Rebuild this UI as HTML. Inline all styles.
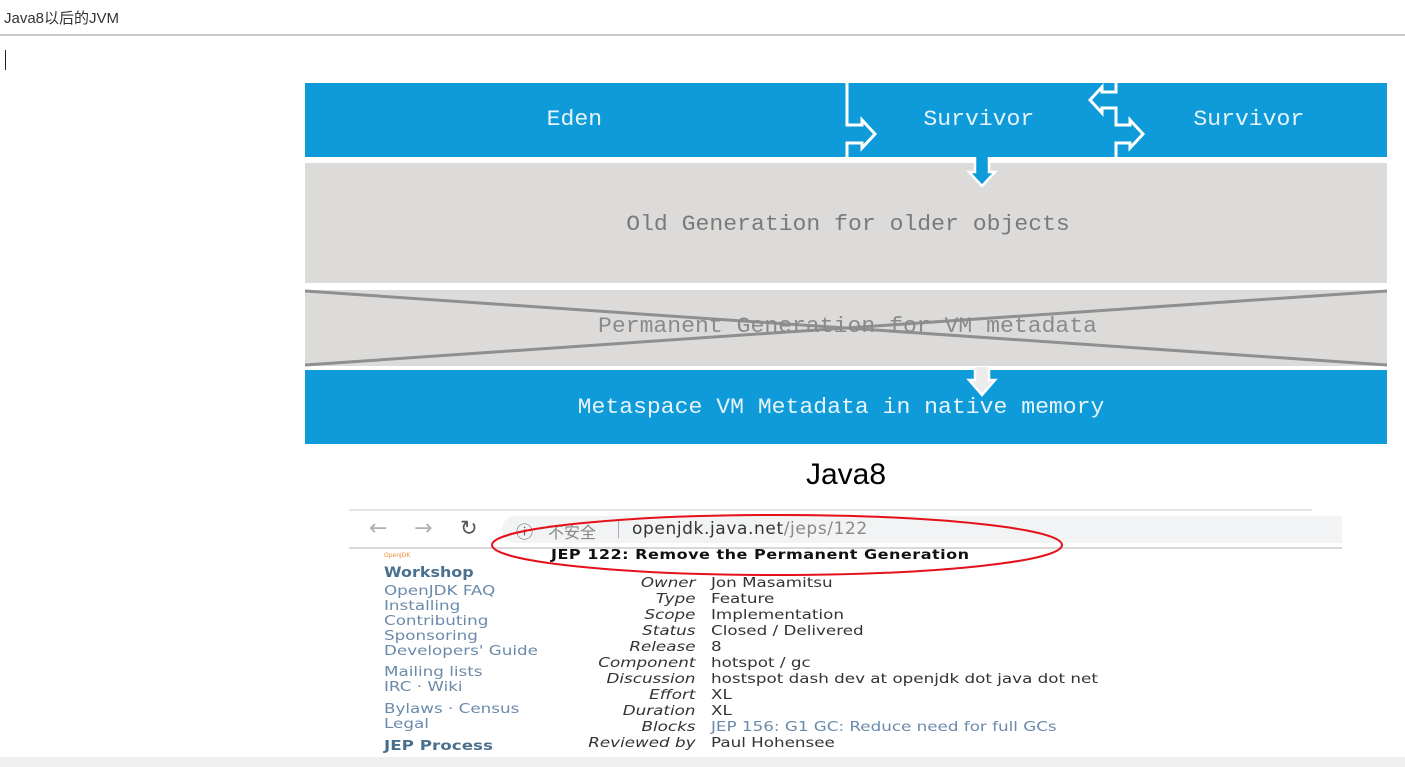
<!DOCTYPE html>
<html><head><meta charset="utf-8"><style>
*{margin:0;padding:0;box-sizing:border-box}
body{width:1405px;height:767px;overflow:hidden;background:#fff;position:relative;font-family:"Liberation Sans","Noto Sans CJK SC",sans-serif}
.a{position:absolute;white-space:nowrap}
.m{font-family:"Liberation Mono","DejaVu Sans Mono",monospace;font-size:22px;transform:scaleX(1.05);transform-origin:center}
.d{font-family:"DejaVu Sans","Liberation Sans",sans-serif;font-size:13.5px}
.sx{transform:scaleX(1.24);transform-origin:left top}
.lk{color:#6a8aaa}
.lb{font-style:italic;color:#333;right:710px;text-align:right;transform:scaleX(1.24);transform-origin:right top}
.v{left:711px;color:#333}
</style></head><body>
<div class="a" style="left:4px;top:7px;font-size:15px;color:#333">Java8以后的JVM</div>
<div class="a" style="left:0;top:34px;width:1405px;height:2px;background:#c8c8c8"></div>
<div class="a" style="left:5px;top:50px;width:1px;height:20px;background:#222"></div>

<svg class="a" style="left:0;top:0" width="1405" height="460">
<rect x="305" y="83" width="1082" height="74" fill="#0f9bd9"/>
<rect x="305" y="163" width="1082" height="120" fill="#dcdbda"/>
<rect x="305" y="290" width="1082" height="76" fill="#dcdbda"/>
<rect x="305" y="370" width="1082" height="74" fill="#0f9bd9"/>
<line x1="305" y1="291" x2="1387" y2="365" stroke="#8f8f8f" stroke-width="3"/>
<line x1="305" y1="365" x2="1387" y2="291" stroke="#8f8f8f" stroke-width="3"/>
<path d="M847 83 V125 H862 V120 L875 134 L862 148 V143 H847 V157" fill="#0f9bd9" stroke="#fff" stroke-width="3"/>
<path d="M1116 83 V92 H1102 V87 L1090 100 L1102 113 V108 H1116 V125 H1130 V120 L1143 134 L1130 148 V143 H1116 V157" fill="#0f9bd9" stroke="#fff" stroke-width="3"/>
<path d="M975 157 V172 H969 L982 186 L995 172 H989 V157" fill="#0f9bd9" stroke="#fff" stroke-width="2.5"/>
<path d="M975 367 V380 H969 L982 395 L995 380 H989 V367" fill="#ececec" stroke="#fff" stroke-width="2.5"/>
</svg>
<div class="a m" style="left:548px;top:107px;color:#e6f4fb">Eden</div>
<div class="a m" style="left:926px;top:107px;color:#e6f4fb">Survivor</div>
<div class="a m" style="left:1196px;top:107px;color:#e6f4fb">Survivor</div>
<div class="a m" style="left:625px;top:212px;color:#7a7a7a;width:446px;text-align:center">Old Generation for older objects</div>
<div class="a m" style="left:597px;top:314px;color:#8a8a8a;width:501px;text-align:center">Permanent Generation for VM metadata</div>
<div class="a m" style="left:576px;top:395px;color:#e6f4fb;width:530px;text-align:center">Metaspace VM Metadata in native memory</div>
<div class="a" style="left:746px;top:458px;width:200px;text-align:center;font-size:30px;color:#000">Java8</div>

<div class="a" style="left:349px;top:509px;width:963px;height:2px;background:#e4e4e6"></div>
<div class="a" style="left:502px;top:516px;width:840px;height:27px;background:#f1f3f4;border-radius:14px 0 0 14px"></div>
<div class="a" style="left:349px;top:547px;width:993px;height:2px;background:#d8d8d8"></div>
<div class="a d" style="left:369px;top:516px;font-size:22px;color:#b0b0b0">←</div>
<div class="a d" style="left:414px;top:516px;font-size:22px;color:#b0b0b0">→</div>
<div class="a d" style="left:460px;top:516px;font-size:21px;color:#555">↻</div>
<div class="a d" style="left:516px;top:518px;font-size:17px;color:#666">ⓘ</div>
<div class="a" style="left:548px;top:519px;font-size:16px;color:#888;font-family:'Noto Sans CJK SC',sans-serif">不安全</div>
<div class="a" style="left:618px;top:520px;width:1px;height:18px;background:#aaa"></div>
<div class="a d" style="left:632px;top:519px;font-size:17px;color:#333;letter-spacing:0.6px">openjdk.java.net<span style="color:#888">/jeps/122</span></div>
<svg class="a" style="left:490px;top:510px" width="590" height="70"><ellipse cx="287" cy="35" rx="285" ry="30" fill="none" stroke="#e5101a" stroke-width="2"/></svg>
<div class="a d" style="left:384px;top:552px;font-size:6px;color:#e7903a">OpenJDK</div>
<div class="a d sx" style="left:551px;top:547px;font-weight:bold;color:#111;font-size:13.5px;letter-spacing:0.4px;transform:scaleX(1.19)">JEP 122: Remove the Permanent Generation</div>
<div class="a d sx" style="left:384px;top:565px;font-weight:bold;color:#4a7090;font-size:14.5px;transform:scaleX(1.1)">Workshop</div>
<div class="a d lk sx" style="left:384px;top:584px;line-height:15px">OpenJDK FAQ<br>Installing<br>Contributing<br>Sponsoring<br>Developers' Guide</div>
<div class="a d lk sx" style="left:384px;top:665px;line-height:15px">Mailing lists<br>IRC · Wiki</div>
<div class="a d lk sx" style="left:384px;top:702px;line-height:15px">Bylaws · Census<br>Legal</div>
<div class="a d sx" style="left:384px;top:738px;font-weight:bold;color:#4a7090">JEP Process</div>
<div class="a d lb" style="top:575px;line-height:16px">Owner<br>Type<br>Scope<br>Status<br>Release<br>Component<br>Discussion<br>Effort<br>Duration<br>Blocks<br>Reviewed by</div>
<div class="a d v sx" style="top:575px;line-height:16px">Jon Masamitsu<br>Feature<br>Implementation<br>Closed / Delivered<br>8<br>hotspot / gc<br>hostspot dash dev at openjdk dot java dot net<br>XL<br>XL<br><span style="color:#6a8aaa">JEP 156: G1 GC: Reduce need for full GCs</span><br>Paul Hohensee</div>
<div class="a" style="left:0;top:757px;width:1405px;height:10px;background:#f0f0f0"></div>
</body></html>
